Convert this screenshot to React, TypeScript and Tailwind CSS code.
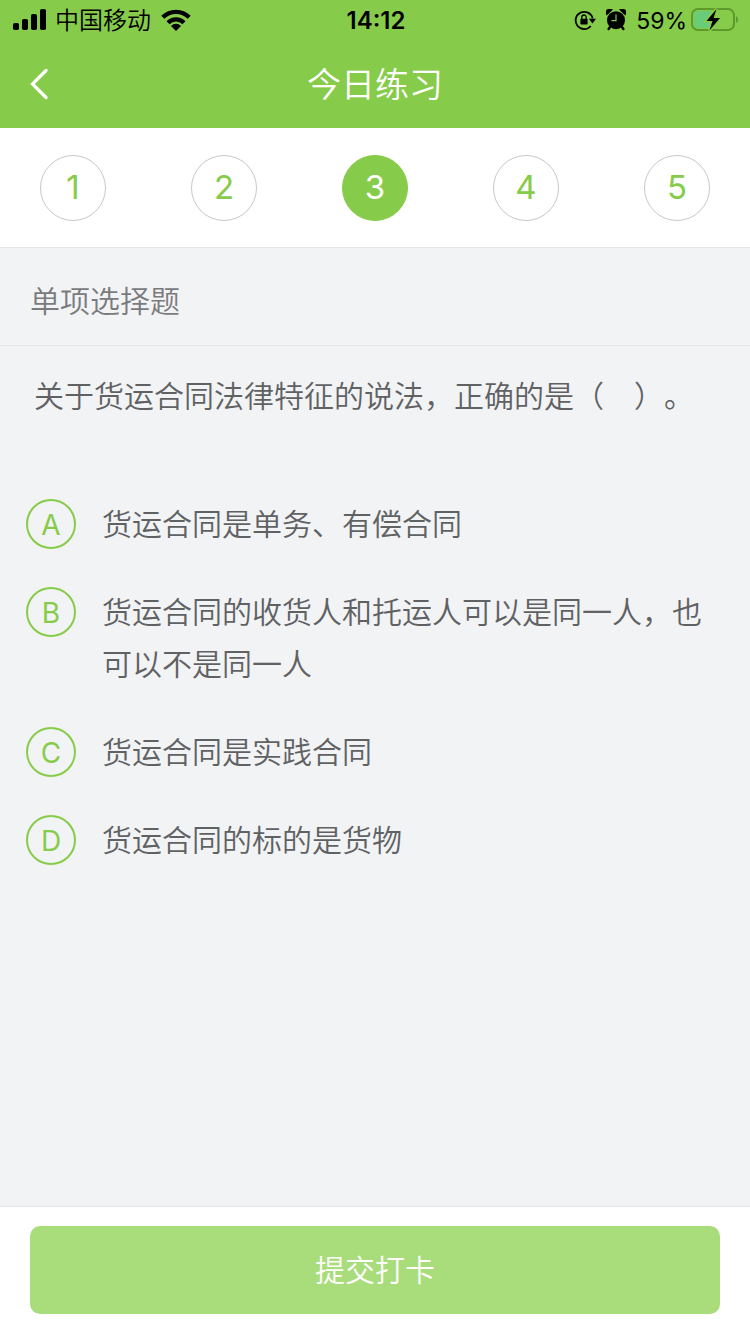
import clsx from 'clsx'
import { useState } from 'react'

const STEPS = [1, 2, 3, 4, 5]

const OPTIONS = [
  { key: 'A', text: '货运合同是单务、有偿合同' },
  { key: 'B', text: '货运合同的收货人和托运人可以是同一人，也可以不是同一人' },
  { key: 'C', text: '货运合同是实践合同' },
  { key: 'D', text: '货运合同的标的是货物' },
]

function SignalIcon() {
  return (
    <svg width="34" height="22" viewBox="0 0 34 22" aria-hidden="true">
      <rect x="0" y="14" width="6" height="7" rx="1.8" />
      <rect x="9" y="10" width="6" height="11" rx="1.8" />
      <rect x="18" y="5" width="6" height="16" rx="1.8" />
      <rect x="27" y="0" width="6" height="21" rx="1.8" />
    </svg>
  )
}

function WifiIcon() {
  return (
    <svg width="30" height="22" viewBox="0 0 30 22" aria-hidden="true">
      <g fill="none" stroke="#000" strokeWidth="4.4">
        <path d="M1.8 8.3a18.7 18.7 0 0 1 26.4 0" />
        <path d="M7 13.7a11.3 11.3 0 0 1 16 0" />
      </g>
      <path d="M15 22l-5-5.1a7 7 0 0 1 10 0z" />
    </svg>
  )
}

function RotationLockIcon() {
  return (
    <svg width="22" height="22" viewBox="0 0 22 22" aria-hidden="true">
      <path d="M16.8 17A8.6 8.6 0 1 1 18.6 9.4" fill="none" stroke="#000" strokeWidth="1.8" />
      <path d="M14.8 9.8h7.2l-3.5 4.6z" />
      <rect x="6.4" y="9.8" width="7.2" height="5.8" rx="0.8" />
      <path d="M7.8 10.2V8.2a2.2 2.2 0 0 1 4.4 0v2" fill="none" stroke="#000" strokeWidth="1.3" />
    </svg>
  )
}

function AlarmIcon() {
  return (
    <svg width="20" height="22" viewBox="0 0 20 22" aria-hidden="true">
      <circle cx="10" cy="11.2" r="9" />
      <path d="M0.8 6.4A3.6 3.6 0 0 1 6.8 0.8z" />
      <path d="M19.2 6.4A3.6 3.6 0 0 0 13.2 0.8z" />
      <path d="M4.2 17.8l-1.6 2.2M15.8 17.8l1.6 2.2" stroke="#000" strokeWidth="2.4" strokeLinecap="round" />
      <path d="M10 5.4v6.2H5.4" fill="none" stroke="#86cc4a" strokeWidth="1.2" />
    </svg>
  )
}

function BatteryIcon() {
  return (
    <svg width="48" height="26" viewBox="0 0 48 26" aria-hidden="true">
      <rect x="1" y="2" width="42" height="21" rx="6" fill="none" stroke="#5d9a2b" strokeWidth="2" />
      <path d="M7 4h14v17H7a4 4 0 0 1-4-4V8a4 4 0 0 1 4-4z" fill="#68cc78" />
      <path d="M45 9a4 4 0 0 1 0 7z" fill="#5d9a2b" />
      <path
        d="M25.5 2L15.5 14h6L18.5 23.5l10.5-12.5h-6.4z"
        stroke="#86cc4a"
        strokeWidth="3"
        paintOrder="stroke"
      />
    </svg>
  )
}

function StatusBar() {
  return (
    <div className="grid h-10 grid-cols-[1fr_auto_1fr] items-center pr-[11px] pl-[13px] text-2xl text-black">
      <div className="flex items-center">
        <SignalIcon />
        <span className="mr-2.5 ml-2 pt-0.5 font-[350]">中国移动</span>
        <WifiIcon />
      </div>
      <span className="pt-0.5 text-2xl font-semibold">14:12</span>
      <div className="flex items-center justify-end">
        <RotationLockIcon />
        <span className="ml-2.5">
          <AlarmIcon />
        </span>
        <span className="mr-1 ml-2.5 pt-0.5 text-[23px]">59%</span>
        <BatteryIcon />
      </div>
    </div>
  )
}

function Header() {
  return (
    <header className="bg-[#86cc4a]">
      <StatusBar />
      <div className="grid h-[88px] grid-cols-[80px_1fr_80px] items-center">
        <button type="button" aria-label="返回" className="flex h-full items-center pl-[30px]">
          <svg width="18" height="32" viewBox="0 0 18 32" fill="none" stroke="#fff" strokeWidth="3.2">
            <path d="M16 2.5L2.5 16 16 29.5" strokeLinecap="round" strokeLinejoin="miter" />
          </svg>
        </button>
        <h1 className="text-center text-[34px] font-[350] text-white">今日练习</h1>
      </div>
    </header>
  )
}

export default function App() {
  const [step, setStep] = useState(3)
  const [answer, setAnswer] = useState('')

  return (
    <div className="flex min-h-screen flex-col bg-[#f2f3f5] font-['Inter','Noto_Sans_CJK_SC',sans-serif] [text-spacing-trim:space-all]">
      <Header />

      {/* Question numbers */}
      <nav className="flex h-[120px] items-center justify-between border-b border-[#e6e6e8] bg-white px-10">
        {STEPS.map((n) => (
          <button
            key={n}
            type="button"
            onClick={() => setStep(n)}
            className={clsx(
              'size-[66px] rounded-full border text-[33px]',
              n === step ? 'border-[#86cc4a] bg-[#86cc4a] text-white' : 'border-[#c8c8c8] text-[#86cc4a]',
            )}
          >
            {n}
          </button>
        ))}
      </nav>

      <main className="flex-1 text-[30px] leading-[52px] font-[350] text-[#606163]">
        <h2 className="flex h-[98px] items-center border-b border-[#e6e7e9] px-[30px] pt-3 pb-1 text-[#7a7b7d]">
          单项选择题
        </h2>

        <fieldset className="pt-6 pr-[30px] pb-10 pl-[26px]">
          <legend className="float-left w-full pl-2">关于货运合同法律特征的说法，正确的是（　）。</legend>
          <div className="clear-both flex flex-col gap-9 pt-[76px]">
            {OPTIONS.map(({ key, text }) => (
              <label key={key} className="flex cursor-pointer gap-[26px]">
                <input
                  type="radio"
                  name="answer"
                  value={key}
                  checked={answer === key}
                  onChange={() => setAnswer(key)}
                  className="peer sr-only"
                />
                <span className="my-px flex size-[50px] shrink-0 items-center justify-center rounded-full border-2 border-[#86cc4a] pt-0.5 text-[28px] font-normal text-[#86cc4a] peer-checked:bg-[#86cc4a] peer-checked:text-white">
                  {key}
                </span>
                <span>{text}</span>
              </label>
            ))}
          </div>
        </fieldset>
      </main>

      <footer className="border-t border-[#e6e7e9] bg-white px-[30px] pt-[19px] pb-5">
        <button type="button" className="h-[88px] w-full rounded-[10px] bg-[#a9dc7a] text-[30px] font-[350] text-white">
          提交打卡
        </button>
      </footer>
    </div>
  )
}
